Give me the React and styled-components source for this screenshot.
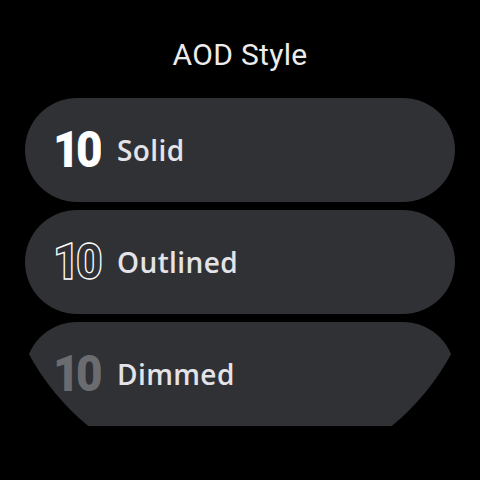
import React from "react";
import styled, { createGlobalStyle, css } from "styled-components";

const Global = createGlobalStyle`
  html, body { margin: 0; padding: 0; background: #000; }
  body { width: 480px; height: 480px; overflow: hidden; }
`;

const Screen = styled.div`
  width: 480px;
  height: 480px;
  border-radius: 50%;
  overflow: hidden;
  background: #000;
  display: flex;
  flex-direction: column;
  align-items: center;
  padding-top: 30px;
  box-sizing: border-box;
`;

const Title = styled.h1`
  margin: 0 0 18px;
  font-family: Roboto, "Liberation Sans", sans-serif;
  font-weight: 400;
  font-size: 30px;
  line-height: 50px;
  color: #ececec;
  letter-spacing: 0.3px;
`;

const List = styled.div`
  width: 430px;
  display: flex;
  flex-direction: column;
  gap: 8px;
`;

const Chip = styled.button`
  all: unset;
  box-sizing: border-box;
  height: 104px;
  border-radius: 52px;
  background: #303135;
  display: flex;
  align-items: center;
  gap: 16px;
  padding-left: 28px;
  flex-shrink: 0;
`;

const variants = {
  solid: css`color: #ffffff;`,
  outlined: css`
    color: transparent;
    -webkit-text-stroke: 1.4px #ffffff;
  `,
  dimmed: css`color: #6b6c6f;`,
};

const Digits = styled.span`
  font-family: Roboto, "Liberation Sans", sans-serif;
  font-weight: 900;
  font-size: 50px;
  line-height: 1;
  letter-spacing: -4px;
  display: inline-block;
  width: 48px;
  transform: scaleX(0.92);
  transform-origin: left center;
  ${(p) => variants[p.$variant]}
`;

const Label = styled.span`
  font-family: "Open Sans", Roboto, sans-serif;
  font-weight: 600;
  font-size: 28px;
  color: #e3e3e8;
  letter-spacing: 0.4px;
  line-height: 1;
`;

const items = [
  { id: "solid", label: "Solid" },
  { id: "outlined", label: "Outlined" },
  { id: "dimmed", label: "Dimmed" },
];

export default function App() {
  return (
    <>
      <Global />
      <Screen>
        <Title>AOD Style</Title>
        <List>
          {items.map((it) => (
            <Chip key={it.id}>
              <Digits $variant={it.id}>10</Digits>
              <Label>{it.label}</Label>
            </Chip>
          ))}
        </List>
      </Screen>
    </>
  );
}
